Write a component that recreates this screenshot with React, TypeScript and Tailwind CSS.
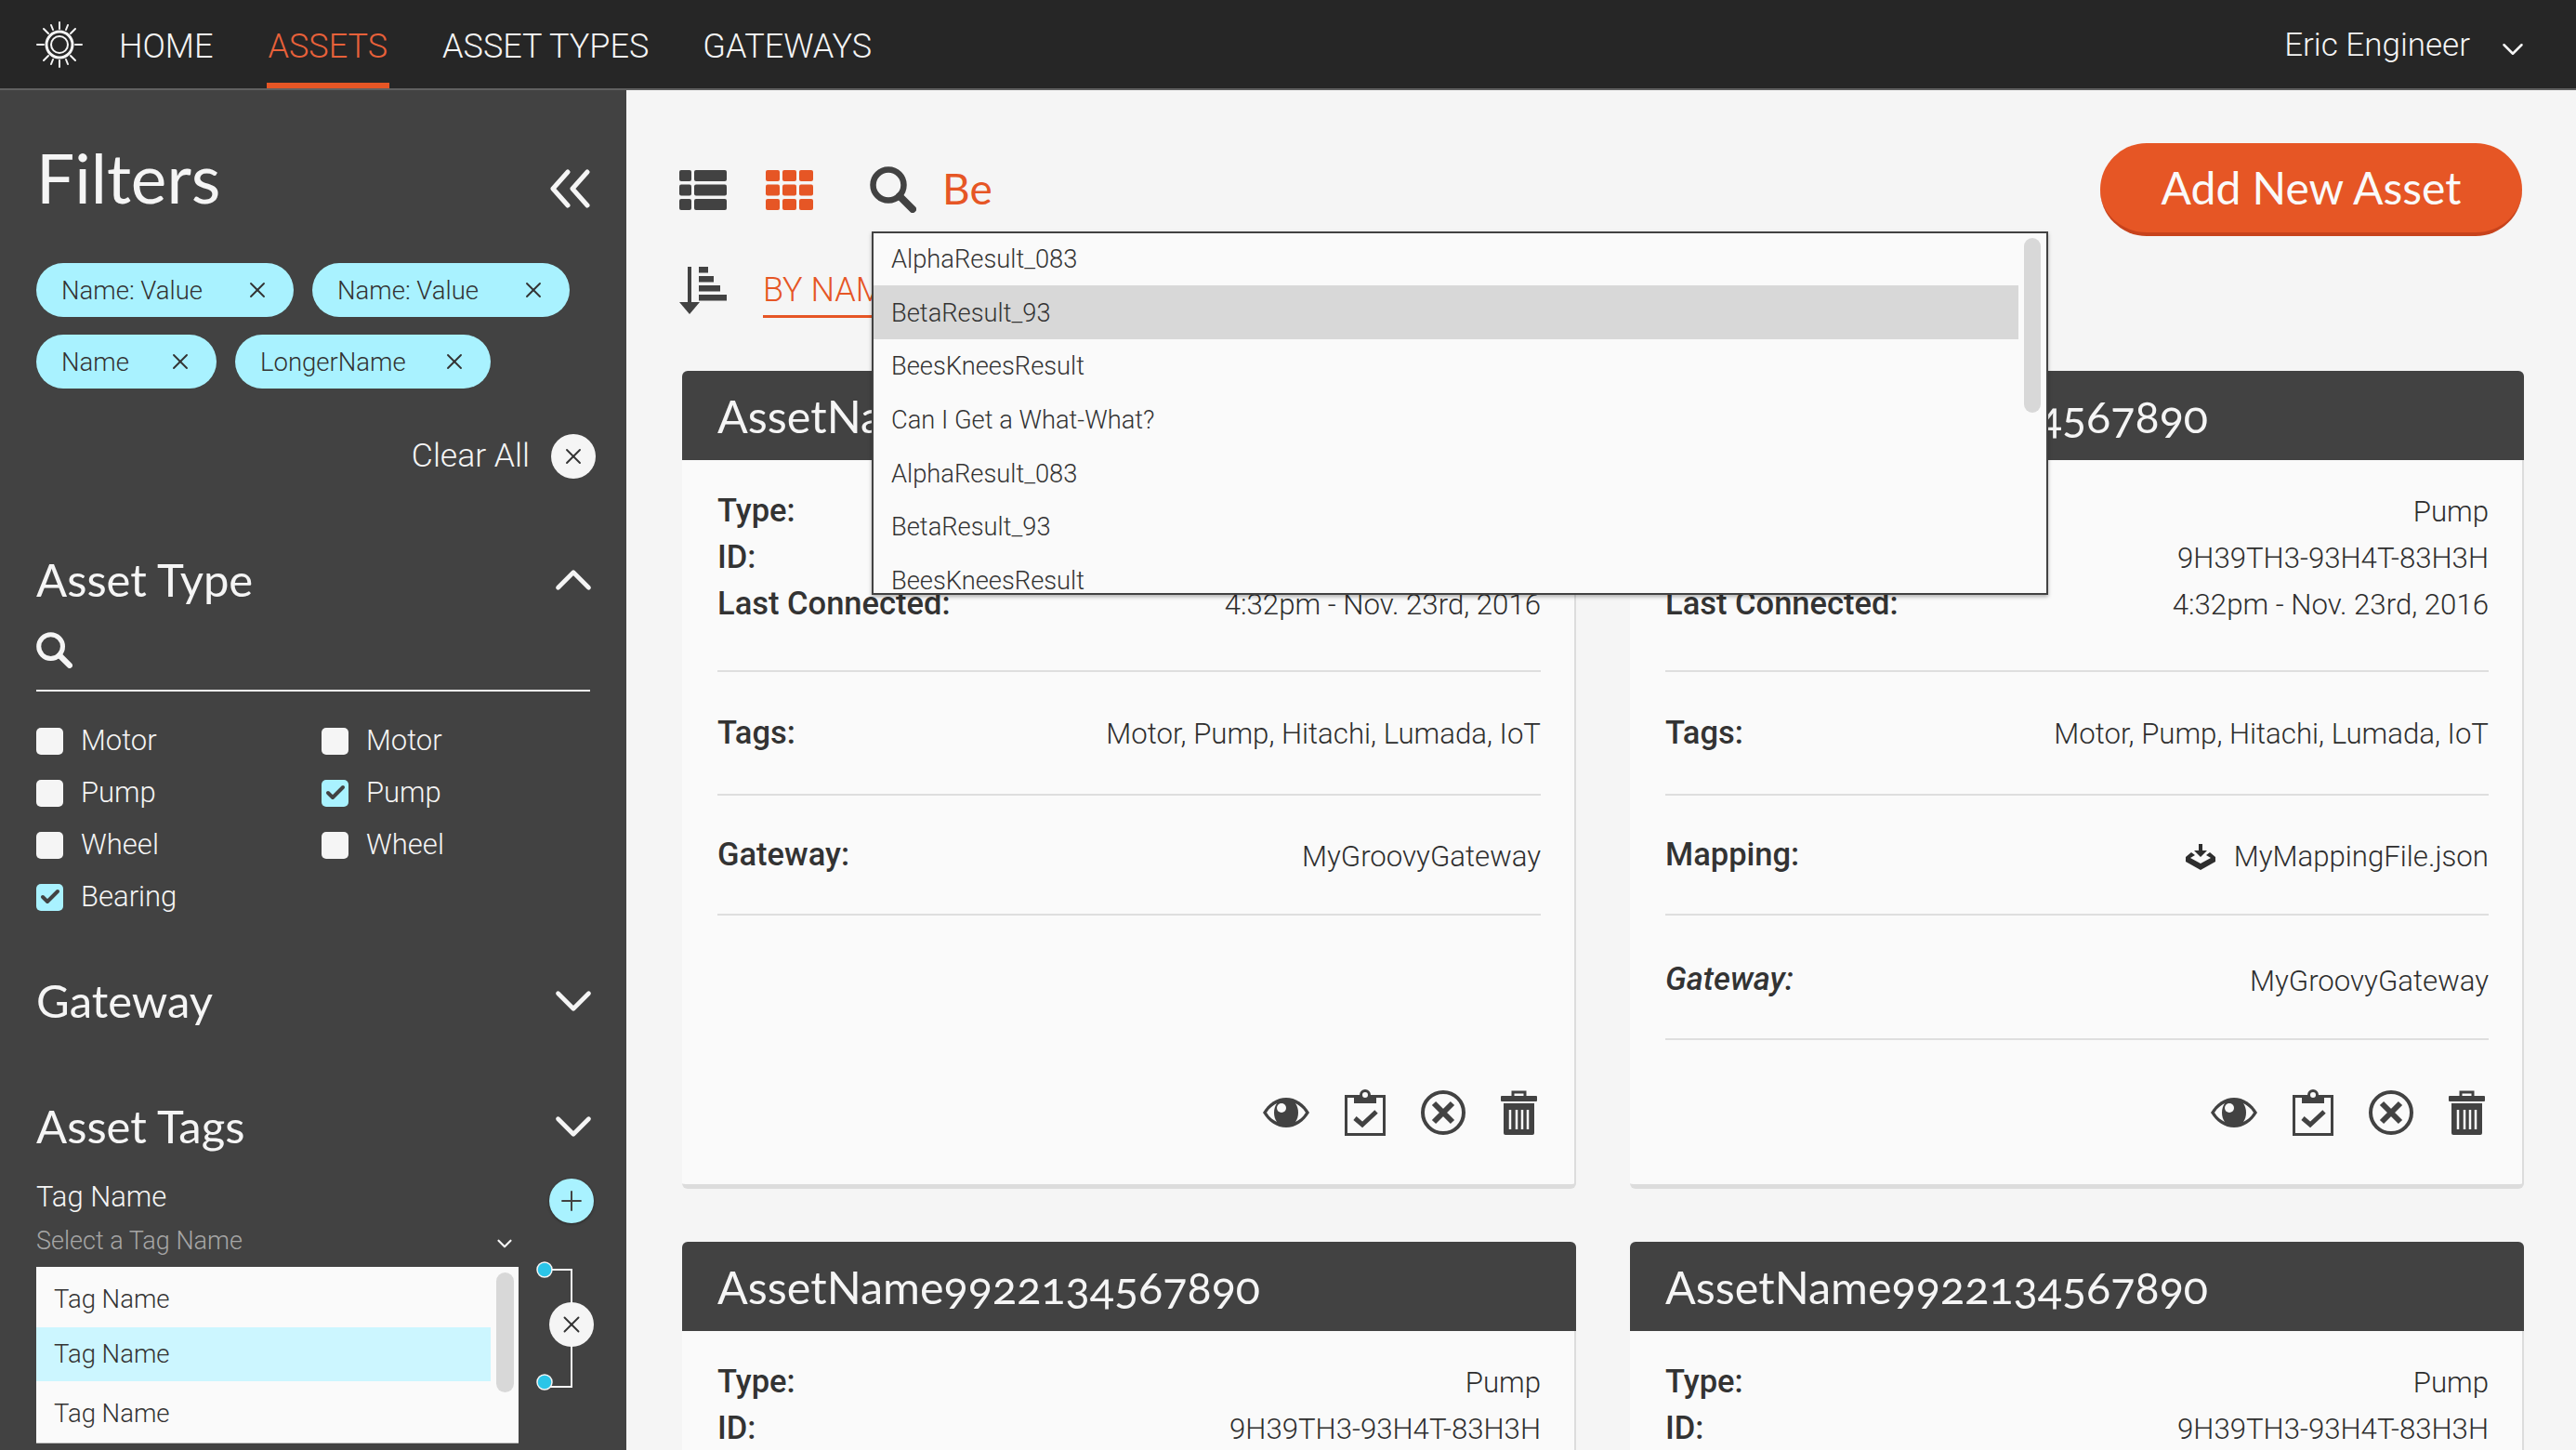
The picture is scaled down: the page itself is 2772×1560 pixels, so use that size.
import { Check, ChevronDown, ChevronUp, Plus, X } from 'lucide-react'

const roboto = '[font-family:Roboto,sans-serif]'
const lato = '[font-family:Lato,sans-serif]'

// Sun style logo in the top bar
const Logo = () => (
    <svg width="52" height="52" viewBox="0 0 52 52" fill="none" stroke="#f5f5f5" strokeLinecap="round">
        <circle cx="26" cy="26" r="14" strokeWidth="3" />
        <circle cx="26" cy="26" r="9" strokeWidth="2" />
        <path strokeWidth="2" d="M26 2v7M26 43v7M2 26h7M43 26h7M9 9l5 5M38 38l5 5M9 43l5-5M38 14l5-5" />
        <path strokeWidth="2" d="M17 5l2 5M33 42l2 5M17 47l2-5M33 10l2-5" />
    </svg>
)

const ListIcon = () => (
    <svg width="51" height="43" viewBox="0 0 51 43" fill="#424242">
        <rect x="0" y="0" width="13" height="12" rx="2" />
        <rect x="16" y="0" width="35" height="12" rx="2" />
        <rect x="0" y="15.5" width="13" height="12" rx="2" />
        <rect x="16" y="15.5" width="35" height="12" rx="2" />
        <rect x="0" y="31" width="13" height="12" rx="2" />
        <rect x="16" y="31" width="35" height="12" rx="2" />
    </svg>
)

const GridIcon = () => (
    <svg width="51" height="43" viewBox="0 0 51 43" fill="#e65625">
        {[0, 15.5, 31].map((y) =>
            [0, 18, 36].map((x) => <rect key={`${x}-${y}`} x={x} y={y} width="15" height="12" rx="2" />),
        )}
    </svg>
)

const SortIcon = () => (
    <svg width="51" height="51" viewBox="0 0 51 51" fill="#424242">
        <rect x="9" y="0" width="4" height="42" />
        <path d="M0 38h22L11 51z" />
        <rect x="21" y="0" width="10" height="6.5" />
        <rect x="21" y="10" width="16" height="6.5" />
        <rect x="21" y="20" width="23" height="6.5" />
        <rect x="21" y="30" width="30" height="6.5" />
    </svg>
)

const SearchIcon = ({ size, color }: { size: number; color: string }) => (
    <svg width={size} height={size} viewBox="0 0 50 50" fill="none" stroke={color} strokeLinecap="round">
        <circle cx="20" cy="20" r="16.5" strokeWidth="6.5" />
        <path strokeWidth="8" d="M32 32l14 14" />
    </svg>
)

const DoubleLeft = () => (
    <svg width="44" height="42" viewBox="0 0 44 42" fill="none" stroke="#f5f5f5" strokeWidth="5" strokeLinecap="round" strokeLinejoin="round">
        <path d="M20 3L4 21l16 18" />
        <path d="M41 3L25 21l16 18" />
    </svg>
)

const EyeIcon = () => (
    <svg width="50" height="32" viewBox="0 0 50 32">
        <path fill="#424242" d="M0 16C6 6 15 0 25 0s19 6 25 16c-6 10-15 16-25 16S6 26 0 16z" />
        <path fill="#fafafa" d="M4 16c3-5 7-8 11-10-2 3-3 6-3 10 0 4 1 7 3 10-4-2-8-5-11-10zM46 16c-3 5-7 8-11 10 2-3 3-6 3-10 0-4-1-7-3-10 4 2 8 5 11 10z" />
        <circle cx="20" cy="11" r="5" fill="#fafafa" />
    </svg>
)

const ClipboardIcon = () => (
    <svg width="44" height="50" viewBox="0 0 44 50">
        <rect x="1.5" y="7.5" width="41" height="41" fill="none" stroke="#424242" strokeWidth="3" />
        <path fill="#424242" d="M10 6h24v9H10z" />
        <circle cx="22" cy="6" r="4.5" fill="#fafafa" stroke="#424242" strokeWidth="3" />
        <path fill="none" stroke="#424242" strokeWidth="5" d="M11 31l8 7 15-14" />
    </svg>
)

const CircleXIcon = () => (
    <svg width="48" height="48" viewBox="0 0 48 48" fill="none" stroke="#424242">
        <circle cx="24" cy="24" r="22" strokeWidth="4" />
        <path strokeWidth="6" d="M14 14l20 20M34 14L14 34" />
    </svg>
)

const TrashIcon = () => (
    <svg width="39" height="48" viewBox="0 0 39 48" fill="#424242">
        <path fill="none" stroke="#424242" strokeWidth="3" d="M13 7V2h13v5" />
        <rect x="0" y="6" width="39" height="6" rx="1" />
        <path d="M3 14h33v32a2 2 0 0 1-2 2H5a2 2 0 0 1-2-2z" />
        <path stroke="#fafafa" strokeWidth="2.5" d="M10 21v21M17 21v21M23 21v21M29 21v21" />
    </svg>
)

const DownloadIcon = () => (
    <svg width="32" height="28" viewBox="0 0 32 28" fill="#2e2e2e">
        <path d="M14 0h4v7h5l-7 7-7-7h5z" />
        <path d="M6 9l4 3-5 3 11 6 11-6-5-3 4-3 6 5v5L16 28 0 19v-5z" />
    </svg>
)

function Chip({ label, width }: { label: string; width: string }) {
    return (
        <div className={`${width} h-[58px] rounded-[29px] bg-[#a9f2ff] pl-[27px] pr-[25px] flex items-center justify-between ${roboto} text-[27.5px] font-light text-[#333]`}>
            <span className="pt-[2px]">{label}</span>
            <X className="w-[28px] h-[28px] text-[#333]" strokeWidth={1.6} />
        </div>
    )
}

function SectionTitle({ title, open }: { title: string; open?: boolean }) {
    const Icon = open ? ChevronUp : ChevronDown
    return (
        <div className="flex items-center justify-between h-[60px]">
            <span className={`${lato} text-[49px] text-[#f5f5f5]`}>{title}</span>
            <Icon className="w-[66px] h-[66px] flex-shrink-0 -mr-[15px] text-[#f5f5f5]" strokeWidth={1.7} />
        </div>
    )
}

function CheckItem({ label, checked }: { label: string; checked?: boolean }) {
    return (
        <div className="flex items-center h-[56px]">
            <div className={`w-[29px] h-[29px] rounded-[5px] flex items-center justify-center ${checked ? 'bg-[#a9f2ff]' : 'bg-[#f5f5f5]'}`}>
                {checked && <Check className="w-[24px] h-[24px] text-[#424242]" strokeWidth={4} />}
            </div>
            <span className={`ml-[19px] ${roboto} font-light text-[31px] text-[#f5f5f5]`}>{label}</span>
        </div>
    )
}

function Sidebar() {
    return (
        <aside className="w-[674px] flex-shrink-0 bg-[#424242] pl-[39px] pr-[39px] overflow-hidden">
            <div className="flex items-center justify-between pt-[44px] h-[145px]">
                <span className={`${lato} text-[73px] text-[#f5f5f5]`}>Filters</span>
                <div className="mt-[22px] mr-[0px]"><DoubleLeft /></div>
            </div>
            <div className="flex flex-wrap gap-x-[20px] gap-y-[19px] mt-[41px]">
                <Chip label="Name: Value" width="w-[277px]" />
                <Chip label="Name: Value" width="w-[277px]" />
                <Chip label="Name" width="w-[194px]" />
                <Chip label="LongerName" width="w-[275px]" />
            </div>
            <div className="flex items-center justify-end gap-[23px] h-[50px] mt-[48px] -mr-[6px]">
                <span className={`${roboto} font-light text-[35.5px] text-[#f5f5f5]`}>Clear All</span>
                <div className="w-[48px] h-[48px] rounded-full bg-[#f5f5f5] flex items-center justify-center">
                    <X className="w-[28px] h-[28px] text-[#333]" strokeWidth={1.6} />
                </div>
            </div>
            <div className="mt-[78px]">
                <SectionTitle title="Asset Type" open />
            </div>
            <div className="h-[62px] mt-[7px] pt-[19px] border-b-2 border-[#f5f5f5] box-content">
                <SearchIcon size={39} color="#f5f5f5" />
            </div>
            <div className="grid grid-cols-[307px_1fr] mt-[25px]">
                <CheckItem label="Motor" />
                <CheckItem label="Motor" />
                <CheckItem label="Pump" />
                <CheckItem label="Pump" checked />
                <CheckItem label="Wheel" />
                <CheckItem label="Wheel" />
                <CheckItem label="Bearing" checked />
            </div>
            <div className="mt-[54px]">
                <SectionTitle title="Gateway" />
            </div>
            <div className="mt-[75px]">
                <SectionTitle title="Asset Tags" />
            </div>
            <div className="flex mt-[23px]">
                <div className="w-[519px] flex-shrink-0">
                    <div className={`${roboto} font-light text-[31px] leading-[40px] text-[#f5f5f5] mt-[3px]`}>Tag Name</div>
                    <div className="flex items-center justify-between mt-[7px] h-[40px]">
                        <span className={`${roboto} font-light text-[27px] text-[#a6a6a6]`}>Select a Tag Name</span>
                        <ChevronDown className="w-[26px] h-[26px] mt-[6px] mr-[2px] text-[#f5f5f5]" strokeWidth={2} />
                    </div>
                    <div className="relative h-[190px] mt-[8px] bg-[#fafafa] border-b border-[#bdbdbd]">
                        <div className={`flex items-center h-[65px] pt-[5px] pl-[19px] ${roboto} font-light text-[27.5px] text-[#333]`}>Tag Name</div>
                        <div className={`flex items-center h-[58px] w-[489px] pl-[19px] bg-[#ccf6ff] ${roboto} font-light text-[27.5px] text-[#333]`}>Tag Name</div>
                        <div className={`flex items-center h-[66px] pt-[4px] pl-[19px] ${roboto} font-light text-[27.5px] text-[#333]`}>Tag Name</div>
                        <div className="absolute top-[6px] right-[5px] w-[19px] h-[129px] rounded-full bg-[#d8d8d8]" />
                    </div>
                </div>
                <div className="flex-1 ml-[19px] flex flex-col">
                    <div className="ml-[14px] w-[48px] h-[48px] mt-[3px] rounded-full bg-[#a9f2ff] shadow-[0_1px_3px_rgba(0,0,0,0.4)] flex items-center justify-center">
                        <Plus className="w-[34px] h-[34px] text-[#424242]" strokeWidth={1.4} />
                    </div>
                    <div className="relative w-[70px] h-[140px] mt-[41px]">
                        <svg width="70" height="140" viewBox="0 0 70 140" fill="none">
                            <path stroke="#f5f5f5" strokeWidth="2" d="M10 9h28v126H10" />
                            <circle cx="9" cy="9" r="8" fill="#2bc5e8" stroke="#f5f5f5" strokeWidth="1.5" />
                            <circle cx="9" cy="130" r="8" fill="#2bc5e8" stroke="#f5f5f5" strokeWidth="1.5" />
                        </svg>
                        <div className="absolute top-[44px] left-[14px] w-[48px] h-[48px] rounded-full bg-[#f5f5f5] flex items-center justify-center">
                            <X className="w-[30px] h-[30px] text-[#333]" strokeWidth={1.5} />
                        </div>
                    </div>
                </div>
            </div>
        </aside>
    )
}

function InfoRow({ label, value }: { label: string; value: string }) {
    return (
        <div className={`flex items-center justify-between h-[50px] ${roboto}`}>
            <span className="text-[34.5px] font-medium text-[#333]">{label}</span>
            <span className="mt-[2px] text-[31.2px] font-light text-[#2e2e2e]">{value}</span>
        </div>
    )
}

function Section({ label, h, italic, children, valueClass }: { label: string; h: string; italic?: boolean; children: React.ReactNode; valueClass: string }) {
    return (
        <div className={`${h} flex items-center justify-between border-b-2 border-[#dedede] ${italic ? 'pt-[6px]' : ''} ${roboto}`}>
            <span className={`text-[34.5px] font-medium text-[#333] ${italic ? 'italic' : ''}`}>{label}</span>
            <span className={`flex items-center ${valueClass} text-[31.2px] font-light text-[#2e2e2e]`}>{children}</span>
        </div>
    )
}

function AssetCard({ mapping }: { mapping?: boolean }) {
    return (
        <div className="h-[880px] flex flex-col rounded-[6px] bg-[#fafafa] border-r-2 border-b-[5px] border-[#dcdcdc]">
            <div className={`h-[96px] -mr-[2px] flex items-center pl-[38px] bg-[#424242] rounded-t-[6px] ${lato} text-[48.5px] [font-variant-numeric:oldstyle-nums] text-[#f5f5f5]`}>
                AssetName9922134567890
            </div>
            <div className="flex-1 flex flex-col pl-[38px] pr-[36px]">
                <div className="pt-[30px] pb-[46px] border-b-2 border-[#dedede]">
                    <InfoRow label="Type:" value="Pump" />
                    <InfoRow label="ID:" value="9H39TH3-93H4T-83H3H" />
                    <InfoRow label="Last Connected:" value="4:32pm - Nov. 23rd, 2016" />
                </div>
                <Section label="Tags:" h="h-[133px]" valueClass="mt-[3px]">Motor, Pump, Hitachi, Lumada, IoT</Section>
                {mapping ? (
                    <>
                        <Section label="Mapping:" h="h-[129px]" valueClass="mt-[5px]">
                            <span className="mr-[20px]"><DownloadIcon /></span>MyMappingFile.json
                        </Section>
                        <Section label="Gateway:" h="h-[134px]" valueClass="mt-[5px]" italic>MyGroovyGateway</Section>
                    </>
                ) : (
                    <Section label="Gateway:" h="h-[129px]" valueClass="mt-[5px]">MyGroovyGateway</Section>
                )}
                <div className="mt-auto mb-[52px] mr-[4px] flex items-center justify-end">
                    <EyeIcon />
                    <span className="ml-[38px]"><ClipboardIcon /></span>
                    <span className="ml-[38px]"><CircleXIcon /></span>
                    <span className="ml-[38px]"><TrashIcon /></span>
                </div>
            </div>
        </div>
    )
}

const results = ['AlphaResult_083', 'BetaResult_93', 'BeesKneesResult', 'Can I Get a What-What?', 'AlphaResult_083', 'BetaResult_93', 'BeesKneesResult']

export default function App() {
    return (
        <div className="w-[2772px] h-[1560px] overflow-hidden flex flex-col bg-[#f5f5f5]">
            <header className="h-[97px] flex-shrink-0 flex items-stretch bg-[#262626] border-b-2 border-[#616161] pl-[38px] pr-[49px]">
                <div className="flex items-center pr-[38px]"><Logo /></div>
                <nav className={`flex ${roboto} font-light text-[36px]`}>
                    <a className="flex items-center text-[#f5f5f5] border-b-[6px] border-transparent pt-[10px] pr-[57px]">HOME</a>
                    <a className="flex items-center text-[#e8613a] border-b-[6px] border-[#e65625] pt-[10px] px-[2px]">ASSETS</a>
                    <a className="flex items-center text-[#f5f5f5] border-b-[6px] border-transparent pt-[10px] pl-[57px]">ASSET TYPES</a>
                    <a className="flex items-center text-[#f5f5f5] border-b-[6px] border-transparent pt-[10px] pl-[58px]">GATEWAYS</a>
                </nav>
                <div className={`ml-auto flex items-center pt-[4px] ${roboto} font-light text-[35px] text-[#f5f5f5]`}>
                    Eric Engineer
                    <ChevronDown className="ml-[27px] mt-[6px] w-[38px] h-[38px]" strokeWidth={1.6} />
                </div>
            </header>
            <div className="flex flex-1 min-h-0">
                <Sidebar />
                <main className="relative flex-1 pl-[60px] pr-[56px] pt-[57px] overflow-hidden">
                    <div className="flex items-center h-[100px]">
                        <div className="-ml-[3px]"><ListIcon /></div>
                        <div className="ml-[42px]"><GridIcon /></div>
                        <div className="ml-[61px]"><SearchIcon size={50} color="#424242" /></div>
                        <span className={`ml-[28px] -mt-[4px] ${lato} text-[46px] text-[#e65625]`}>Be</span>
                        <button className={`ml-auto mr-[2px] w-[454px] h-[100px] rounded-[50px] bg-[#e65625] border-b-[4px] border-[#c7431c] ${lato} text-[48px] text-[#fafafa]`}>
                            Add New Asset
                        </button>
                    </div>
                    <div className="flex items-center h-[51px] mt-[33px]">
                        <div className="-ml-[3px]"><SortIcon /></div>
                        <span className={`ml-[39px] pt-[6px] ${roboto} font-light text-[36px] leading-[44px] text-[#e65625] border-b-[3px] border-[#e65625] pb-[5px]`}>BY NAME</span>
                    </div>
                    <div className="grid grid-cols-2 gap-x-[58px] gap-y-[57px] mt-[61px]">
                        <AssetCard />
                        <AssetCard mapping />
                        <AssetCard />
                        <AssetCard />
                    </div>
                    <div className={`absolute left-[264px] top-[152px] w-[1266px] h-[391px] overflow-hidden bg-[#fafafa] border-2 border-[#424242] shadow-[0_2px_4px_rgba(0,0,0,0.3)] ${roboto} font-light text-[27.3px] text-[#333]`}>
                        {results.map((r, i) => (
                            <div key={i} className={`h-[57.7px] flex items-center pl-[19px] pt-[2px] w-[1232px] ${i === 0 ? '-mt-[1.5px]' : ''} ${i === 1 ? 'bg-[#d8d8d8]' : ''}`}>{r}</div>
                        ))}
                        <div className="absolute top-[5px] right-[6px] w-[18px] h-[188px] rounded-full bg-[#d8d8d8]" />
                    </div>
                </main>
            </div>
        </div>
    )
}
